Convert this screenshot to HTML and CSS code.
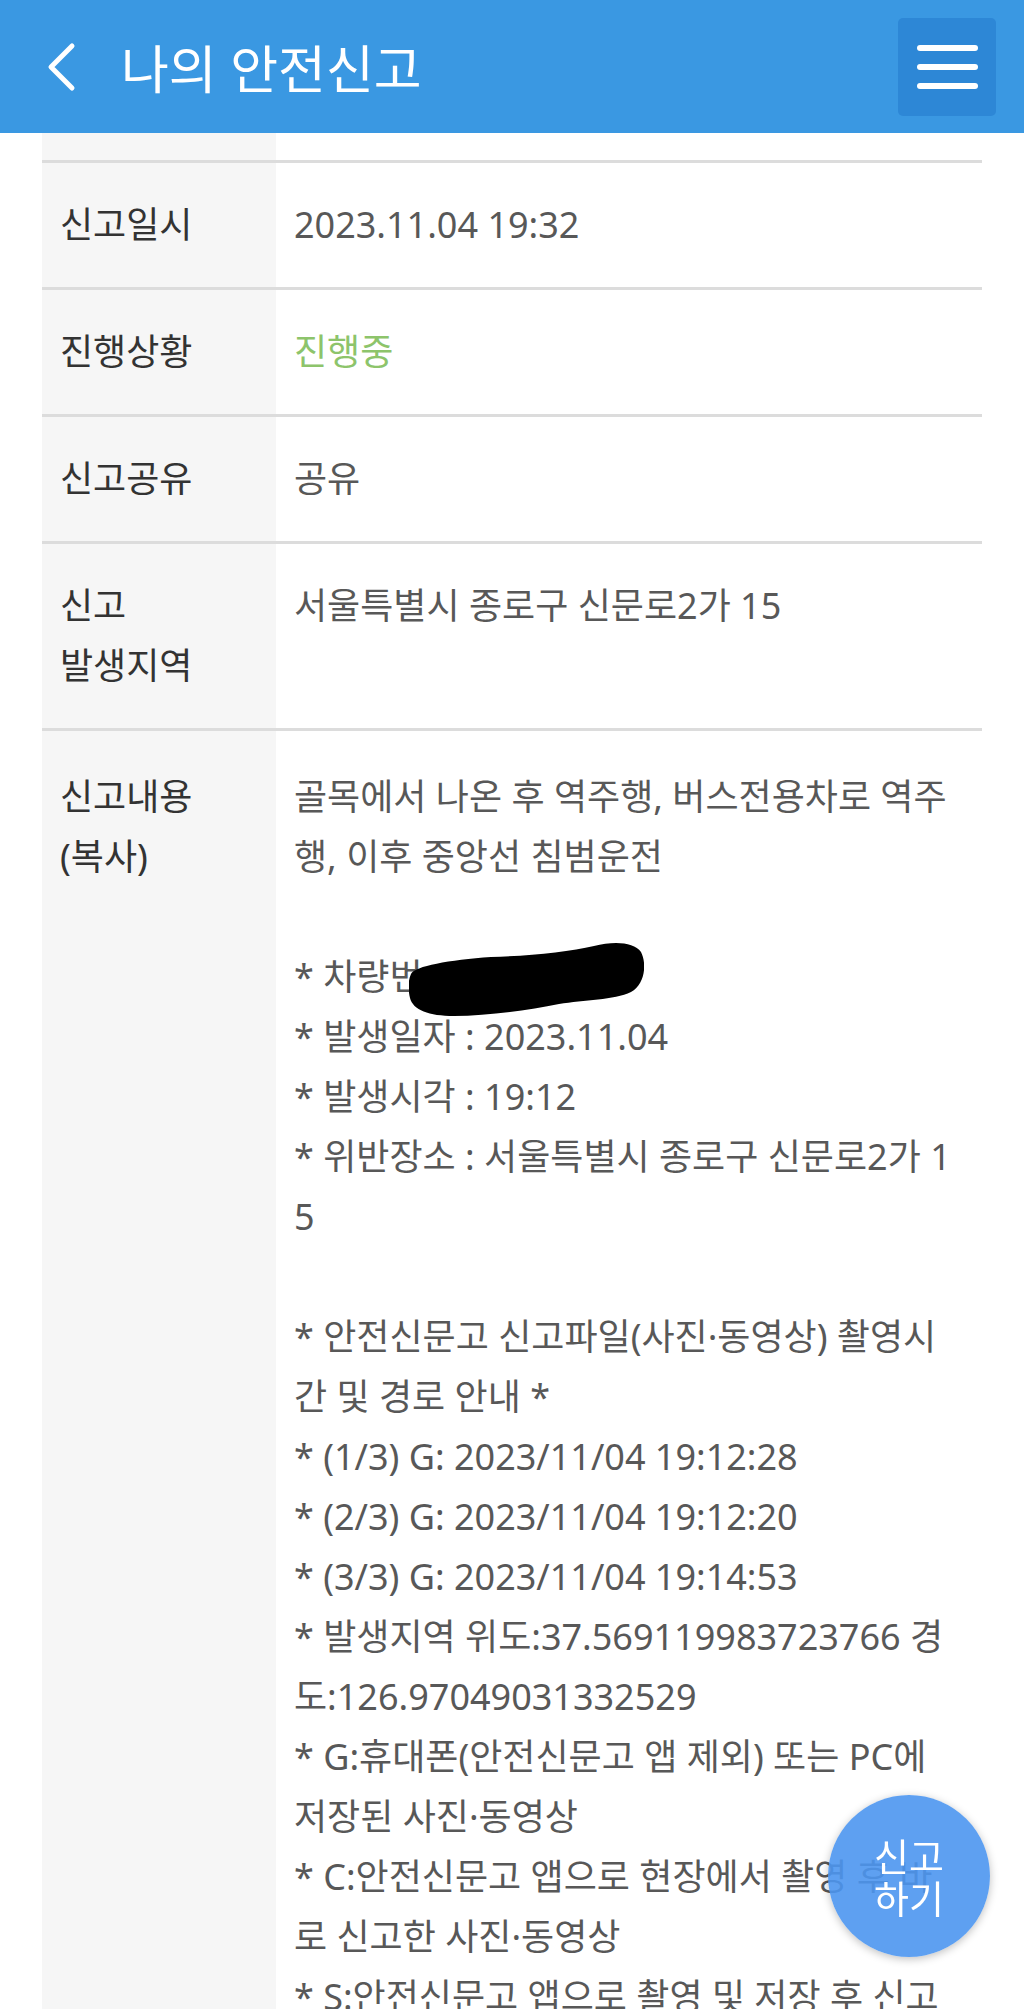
FILE: index.html
```html
<!DOCTYPE html>
<html lang="ko">
<head>
    <meta charset="UTF-8">
    <meta name="viewport" content="width=device-width, initial-scale=1.0">
    <title>나의 안전신고</title>
    <link rel="stylesheet" href="styles.css">
</head>
<body>
    <header class="topbar">
        <a class="back" href="#">
            <svg viewBox="0 0 30 50" width="30" height="50">
                <polyline points="26,4 5,25 26,46" />
            </svg>
        </a>
        <h1 class="title">나의 안전신고</h1>
        <button class="menu-btn"><span></span><span></span><span></span></button>
    </header>

    <main class="detail">
        <div class="row row-cut">
            <div class="th"></div>
            <div class="td"></div>
        </div>
        <div class="row">
            <div class="th">신고일시</div>
            <div class="td">2023.11.04 19:32</div>
        </div>
        <div class="row">
            <div class="th">진행상황</div>
            <div class="td status">진행중</div>
        </div>
        <div class="row">
            <div class="th">신고공유</div>
            <div class="td">공유</div>
        </div>
        <div class="row">
            <div class="th">신고<br>발생지역</div>
            <div class="td">서울특별시 종로구 신문로2가 15</div>
        </div>
        <div class="row row-long">
            <div class="th">신고내용<br>(복사)</div>
            <div class="td content">골목에서 나온 후 역주행, 버스전용차로 역주행, 이후 중앙선 침범운전<br>
                <br>
                * 차량번<span class="redact"><svg viewBox="0 0 235 74" width="235" height="74"><path d="M2,32 C6,24 40,18 82,15 C120,14 160,10 185,4 C205,-1 225,0 232,10 C238,22 236,42 222,50 C205,58 175,58 150,62 C120,68 80,74 45,74 C20,74 4,68 1,56 C-1,48 -1,38 2,32 Z" /></svg></span><br>
                * 발생일자 : 2023.11.04<br>
                * 발생시각 : 19:12<br>
                * 위반장소 : 서울특별시 종로구 신문로2가 15<br>
                <br>
                * 안전신문고 신고파일(사진·동영상) 촬영시간 및 경로 안내 *<br>
                * (1/3) G: 2023/11/04 19:12:28<br>
                * (2/3) G: 2023/11/04 19:12:20<br>
                * (3/3) G: 2023/11/04 19:14:53<br>
                * 발생지역 위도:37.569119983723766 경도:126.97049031332529<br>
                * G:휴대폰(안전신문고 앱 제외) 또는 PC에 저장된 사진·동영상<br>
                * C:안전신문고 앱으로 현장에서 촬영 후 바로 신고한 사진·동영상<br>
                * S:안전신문고 앱으로 촬영 및 저장 후 신고한 사진·동영상
            </div>
        </div>
    </main>

    <a class="report-btn" href="#">신고<br>하기</a>
</body>
</html>
```

FILE: styles.css
```css
body {
    margin: 0;
    background: #fff;
    font-family: "Noto Sans", "Noto Sans CJK KR", sans-serif;
    color: #333;
    overflow: hidden;
}
.topbar {
    display: flex;
    align-items: center;
    height: 133px;
    padding: 0 28px 0 46px;
    background-color: #3a98e2;
    box-sizing: border-box;
}
.back {
    display: flex;
    width: 30px;
    height: 50px;
}
.back polyline {
    fill: none;
    stroke: #fff;
    stroke-width: 5;
    stroke-linecap: round;
    stroke-linejoin: round;
}
.title {
    margin: 0 0 0 45px;
    font-size: 52px;
    font-weight: normal;
    color: #fff;
}
.menu-btn {
    margin-left: auto;
    width: 98px;
    height: 98px;
    border: none;
    border-radius: 5px;
    background-color: #2d87d6;
    display: flex;
    flex-direction: column;
    align-items: center;
    justify-content: center;
    gap: 13px;
    padding: 0;
}
.menu-btn span {
    display: block;
    width: 61px;
    height: 6px;
    border-radius: 3px;
    background: #fff;
}
.detail {
    margin: 0 42px;
}
.row {
    display: grid;
    grid-template-columns: 234px 1fr;
    border-bottom: 3px solid #dcdcdc;
    font-size: 36px;
    line-height: 60px;
}
.th {
    background-color: #f6f6f6;
    padding: 32px 18px;
    color: #333;
}
.td {
    padding: 32px 24px 32px 18px;
    color: #585858;
}
.row-cut .th, .row-cut .td {
    height: 27px;
    padding: 0;
}
.row-long .th, .row-long .td {
    padding-top: 36px;
}
.status {
    color: #8dc46b;
}
.content {
    word-break: break-all;
}
.redact {
    display: inline-block;
    position: relative;
    width: 224px;
    height: 60px;
    vertical-align: top;
}
.redact svg {
    position: absolute;
    left: -14px;
    top: -5px;
}
.redact path {
    fill: #000;
}
.report-btn {
    position: fixed;
    right: 34px;
    bottom: 52px;
    width: 162px;
    height: 162px;
    border-radius: 50%;
    background-color: rgba(76, 150, 240, 0.9);
    box-shadow: 0 2px 8px rgba(0, 0, 0, 0.25);
    color: #fff;
    font-family: "Noto Sans CJK KR", sans-serif;
    font-size: 38px;
    line-height: 42px;
    text-align: center;
    text-decoration: none;
    display: flex;
    align-items: center;
    justify-content: center;
}
```
